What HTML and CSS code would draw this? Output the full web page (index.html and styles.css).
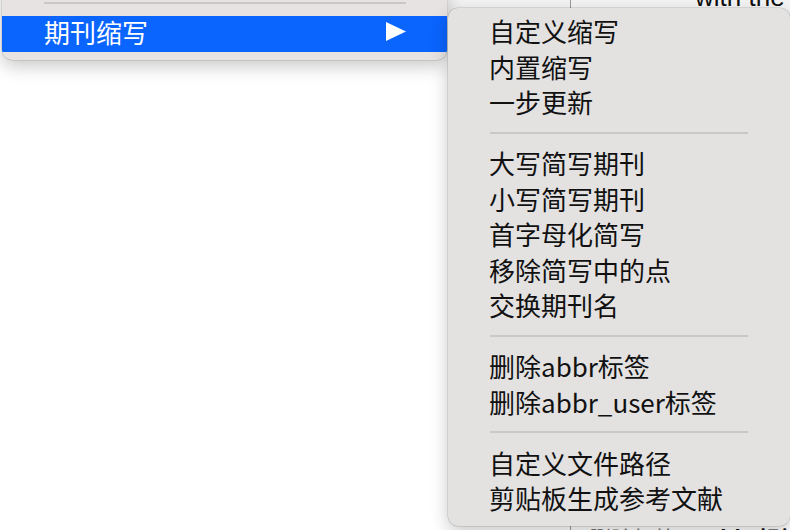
FILE: index.html
```html
<!DOCTYPE html>
<html lang="zh-CN">
<head>
<meta charset="utf-8">
<title>期刊缩写菜单</title>
<link rel="stylesheet" href="styles.css">
</head>
<body>
<div class="backdrop">
  <div class="doc-area"></div>
  <div class="panel">
    <div class="panel-row top-row">
      <div class="cell c1"></div>
      <div class="cell c2"><span class="txt">with the</span></div>
    </div>
    <div class="panel-fill">
      <div class="cell c1"></div>
      <div class="cell c2"></div>
    </div>
    <div class="panel-row bottom-row">
      <div class="cell c1"></div>
      <div class="cell c2"><span class="muted">删除标签</span><span class="bold">abbr标签</span></div>
    </div>
  </div>
</div>

<div class="menu main-menu">
  <div class="sep-block top-sep"><div class="sep-line"></div></div>
  <div class="item highlighted">
    <span class="label">期刊缩写</span>
    <svg class="arrow" width="20" height="20" viewBox="0 0 20 20"><polygon points="0,0 20,9.5 0,19" fill="#fff"/></svg>
  </div>
</div>

<div class="menu sub-menu">
  <div class="item">自定义缩写</div>
  <div class="item">内置缩写</div>
  <div class="item">一步更新</div>
  <div class="sep-block"><div class="sep-line"></div></div>
  <div class="item">大写简写期刊</div>
  <div class="item">小写简写期刊</div>
  <div class="item">首字母化简写</div>
  <div class="item">移除简写中的点</div>
  <div class="item">交换期刊名</div>
  <div class="sep-block"><div class="sep-line"></div></div>
  <div class="item">删除abbr标签</div>
  <div class="item">删除abbr_user标签</div>
  <div class="sep-block"><div class="sep-line"></div></div>
  <div class="item">自定义文件路径</div>
  <div class="item">剪贴板生成参考文献</div>
</div>
</body>
</html>
```

FILE: styles.css
```css
html, body {
  margin: 0;
  padding: 0;
  width: 790px;
  height: 530px;
  overflow: hidden;
  background: #ffffff;
  font-family: "Noto Sans CJK SC", "Noto Sans", sans-serif;
}

.backdrop {
  display: flex;
  width: 790px;
  height: 530px;
}

.doc-area {
  width: 448px;
  flex-shrink: 0;
  background: #ffffff;
}

.panel {
  flex: 1;
  min-width: 0;
  overflow: hidden;
  display: flex;
  flex-direction: column;
  background: #f4f4f4;
}

.panel-row, .panel-fill {
  display: flex;
}

.top-row {
  height: 9px;
  overflow: hidden;
}

.panel-fill {
  flex: 1;
}

.bottom-row {
  height: 12px;
  overflow: hidden;
  background: #ffffff;
}

.c1 {
  width: 122px;
  flex-shrink: 0;
  border-right: 1px solid #9a9a9a;
}

.c2 {
  flex: 1;
  min-width: 0;
}

.top-row .txt {
  display: block;
  margin-top: -18px;
  margin-left: 124px;
  font-family: "Liberation Sans", sans-serif;
  font-size: 26px;
  line-height: 30px;
  color: #111;
  white-space: nowrap;
}

.bottom-row .c2 {
  display: flex;
  white-space: nowrap;
  padding-top: 4px;
  font-size: 22px;
  line-height: 30px;
}

.bottom-row .muted {
  margin-left: 18px;
  color: #777;
}

.bottom-row .bold {
  margin-left: 30px;
  font-weight: 700;
  color: #111;
}

/* Menus */
.menu {
  position: absolute;
  box-sizing: border-box;
  border-radius: 10px;
  display: flex;
  flex-direction: column;
  box-shadow: 0 6px 18px rgba(0, 0, 0, 0.22), 0 0 0 0.5px rgba(0, 0, 0, 0.18);
  font-size: 26px;
  color: #111;
}

.main-menu {
  left: 2px;
  top: -20px;
  width: 445px;
  height: 80px;
  padding: 21px 0 8px 0;
  background: #e8e3e3;
  overflow: hidden;
}

.main-menu .top-sep {
  height: 15px;
  padding: 1px 41px 0 42px;
  display: block;
}

.item {
  height: 35.5px;
  line-height: 35.5px;
  padding-left: 41px;
  white-space: nowrap;
}

.highlighted {
  height: 36px;
  line-height: 36px;
  padding-left: 42px;
  padding-right: 41px;
  background: #0a64fe;
  color: #ffffff;
  display: flex;
  align-items: center;
  justify-content: space-between;
}

.highlighted .label {
  margin-bottom: 5px;
}

.arrow {
  display: block;
  margin-bottom: 5px;
}

.sub-menu {
  left: 448px;
  top: 8px;
  width: 342px;
  height: 518px;
  padding-top: 5px;
  background: #e3e2e1;
}

.sep-block {
  height: 25.5px;
  display: flex;
  align-items: center;
  padding: 0 42px;
}

.sub-menu .sep-block {
  margin-top: 0.5px;
  margin-bottom: -0.5px;
}

.sep-line {
  flex: 1;
  height: 2px;
  background: #c9c8c7;
}
```
